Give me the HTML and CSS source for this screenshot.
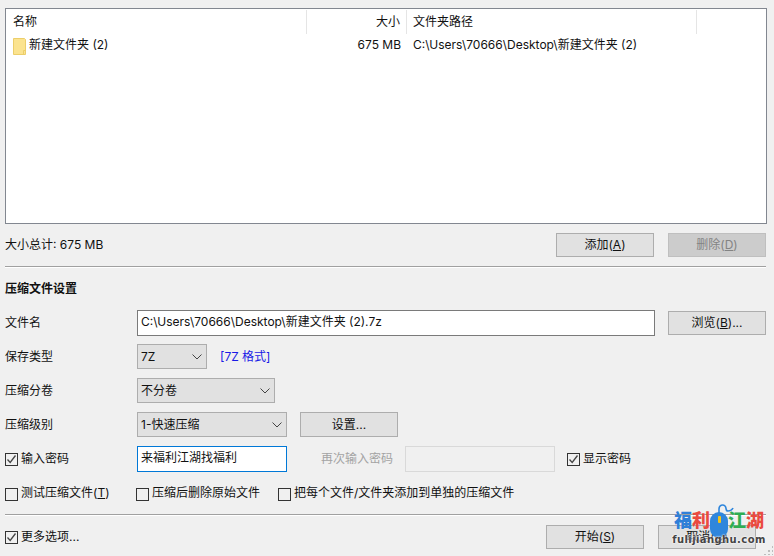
FILE: index.html
```html
<!DOCTYPE html>
<html lang="zh-CN">
<head>
<meta charset="utf-8">
<title>创建压缩文件</title>
<link rel="stylesheet" href="styles.css">
</head>
<body>
<div class="app">
  <div class="list">
    <div class="list-head">
      <div class="col col-name">名称</div>
      <div class="col col-size">大小</div>
      <div class="col col-path">文件夹路径</div>
    </div>
    <div class="list-row">
      <div class="cell col-name-cell">
        <svg class="folder" width="13" height="17" viewBox="0 0 13 17"><path d="M.5.5h11l1 1v15H.5z" fill="#fbe38f" stroke="#ecce6a"/><path d="M10.5 16.5v-4h2" fill="none" stroke="#ecce6a"/></svg>
        <span class="nudge">新建文件夹 (2)</span>
      </div>
      <div class="cell col-size-cell"><span class="nudge">675 MB</span></div>
      <div class="cell col-path-cell"><span class="nudge">C:\Users\70666\Desktop\新建文件夹 (2)</span></div>
    </div>
  </div>

  <div class="summary">
    <div class="summary-text">大小总计: 675 MB</div>
    <div class="btn">添加(<u>A</u>)</div>
    <div class="btn btn-disabled gap-left">删除(<u>D</u>)</div>
  </div>

  <div class="sep sep-top"></div>

  <div class="title">压缩文件设置</div>

  <div class="row row-file">
    <div class="label">文件名</div>
    <div class="input input-file">C:\Users\70666\Desktop\新建文件夹 (2).7z</div>
    <div class="btn gap-left">浏览(<u>B</u>)...</div>
  </div>

  <div class="row row-select">
    <div class="label">保存类型</div>
    <div class="select select-type"><span>7Z</span><svg class="chev" width="10" height="6" viewBox="0 0 10 6"><path d="M.5.5 5 5 9.5.5" fill="none" stroke="#444"/></svg></div>
    <div class="format">[7Z 格式]</div>
  </div>

  <div class="row row-select">
    <div class="label">压缩分卷</div>
    <div class="select select-split"><span>不分卷</span><svg class="chev" width="10" height="6" viewBox="0 0 10 6"><path d="M.5.5 5 5 9.5.5" fill="none" stroke="#444"/></svg></div>
  </div>

  <div class="row row-select">
    <div class="label">压缩级别</div>
    <div class="select select-level"><span>1-快速压缩</span><svg class="chev" width="10" height="6" viewBox="0 0 10 6"><path d="M.5.5 5 5 9.5.5" fill="none" stroke="#444"/></svg></div>
    <div class="btn btn-settings">设置...</div>
  </div>

  <div class="row row-pass">
    <label class="check check-pass">
      <span class="box"><svg width="11" height="11" viewBox="0 0 11 11"><path d="M1.5 5.5 4.2 8.5 9.5 1.5" fill="none" stroke="#444" stroke-width="1.3"/></svg></span>
      <span>输入密码</span>
    </label>
    <div class="input input-pass">来福利江湖找福利</div>
    <div class="label-off">再次输入密码</div>
    <div class="input input-off"></div>
    <label class="check check-show">
      <span class="box"><svg width="11" height="11" viewBox="0 0 11 11"><path d="M1.5 5.5 4.2 8.5 9.5 1.5" fill="none" stroke="#444" stroke-width="1.3"/></svg></span>
      <span>显示密码</span>
    </label>
  </div>

  <div class="row row-checks">
    <label class="check check-test"><span class="box"></span><span class="lift">测试压缩文件(<u>T</u>)</span></label>
    <label class="check check-del"><span class="box"></span><span class="lift">压缩后删除原始文件</span></label>
    <label class="check"><span class="box"></span><span class="lift">把每个文件/文件夹添加到单独的压缩文件</span></label>
  </div>

  <div class="sep sep-bottom"></div>

  <div class="footer">
    <label class="check check-more">
      <span class="box"><svg width="11" height="11" viewBox="0 0 11 11"><path d="M1.5 5.5 4.2 8.5 9.5 1.5" fill="none" stroke="#444" stroke-width="1.3"/></svg></span>
      <span>更多选项...</span>
    </label>
    <div class="btn">开始(<u>S</u>)</div>
    <div class="btn gap-left">取消(<u>C</u>)</div>
  </div>
</div>

<div class="grip"></div>

<div class="watermark">
  <div class="wm-top">
    <span class="wm-blue">福</span><span class="wm-red">利</span>
    <svg class="wm-mouse" width="24" height="35" viewBox="0 0 24 35"><path d="M9 11V6c0-4 4-5 6-3s0 5 3 5 4-1 5-3" fill="none" stroke="#2f86dc" stroke-width="1.6"/><rect x="0" y="9" width="18" height="26" rx="9" fill="#2f86dc"/><rect x="8" y="13" width="3" height="7" rx="1" fill="#f5c518"/></svg>
    <span class="wm-green">江</span><span class="wm-red">湖</span>
  </div>
  <div class="wm-url">fulijianghu.com</div>
</div>
</body>
</html>
```

FILE: styles.css
```css
* { box-sizing: border-box; }

html, body {
  margin: 0;
  padding: 0;
  background: #f0f0f0;
}

body {
  width: 774px;
  height: 556px;
  overflow: hidden;
  position: relative;
  font-family: "Inter", "Noto Sans CJK SC", sans-serif;
  font-size: 12px;
  line-height: 16px;
  color: #111;
}

.app {
  display: flex;
  flex-direction: column;
  padding: 8px 7px 0 5px;
}

/* file list */
.list {
  height: 216px;
  background: #fff;
  border: 1px solid #828790;
}

.list-head {
  display: flex;
  height: 24px;
  margin-top: 1px;
}

.col {
  border-right: 1px solid #e5e5e5;
  line-height: 23px;
}

.col-name { width: 301px; padding-left: 7px; }
.col-size { width: 100px; padding-right: 6px; text-align: right; }
.col-path { width: 290px; padding-left: 6px; }

.list-row {
  display: flex;
  height: 20px;
  margin-top: 1px;
  align-items: center;
}

.cell { white-space: nowrap; }

.col-name-cell {
  width: 301px;
  padding-left: 7px;
  display: flex;
  align-items: center;
  gap: 3px;
}

.folder { flex: none; margin-top: 2px; }
.nudge { display: block; margin-top: -1px; }
.col-size-cell { width: 100px; padding-right: 6px; text-align: right; }
.col-path-cell { padding-left: 6px; }

/* buttons */
.btn {
  width: 98px;
  height: 24px;
  flex: none;
  display: flex;
  align-items: center;
  justify-content: center;
  background: #e1e1e1;
  border: 1px solid #adadad;
  white-space: pre;
}

.btn-disabled {
  background: #cccccc;
  border-color: #bfbfbf;
  color: #838383;
}

.gap-left { margin-left: 14px; }

.summary {
  display: flex;
  align-items: center;
  margin-top: 9px;
  padding-right: 1px;
}

.summary-text { flex: 1; }

.sep {
  height: 2px;
  margin-right: 1px;
  background: #a0a0a0;
  border-bottom: 1px solid #fff;
}

.sep-top { margin-top: 9px; }
.sep-bottom { margin-top: 13px; }

.title {
  margin-top: 13px;
  height: 16px;
  font-weight: 700;
}

.row {
  display: flex;
  align-items: center;
}

.label {
  width: 132px;
  flex: none;
}

.input {
  height: 26px;
  flex: none;
  background: #fff;
  border: 1px solid #7a7a7a;
  padding: 0 3px;
  line-height: 21px;
  white-space: nowrap;
}

.row-file { margin-top: 13px; padding-right: 1px; }
.input-file { width: 518px; }
.row-file .gap-left { margin-left: 13px; }

.row-select { margin-top: 9px; height: 25px; }
.row-file + .row-select { margin-top: 8px; }

.select {
  height: 25px;
  flex: none;
  display: flex;
  align-items: center;
  justify-content: space-between;
  background: #e1e1e1;
  border: 1px solid #adadad;
  padding: 0 4px 0 3px;
}

.chev { flex: none; }

.select-type { width: 70px; }
.select-split { width: 138px; }
.select-level { width: 150px; }

.format {
  margin-left: 13px;
  color: #1a1ae6;
}

.btn-settings {
  height: 25px;
  margin-left: 13px;
}

.row-pass { margin-top: 9px; }

.check {
  display: flex;
  align-items: center;
  gap: 3px;
  white-space: nowrap;
  flex: none;
}

.lift { display: block; margin-top: -3px; }

.box {
  width: 13px;
  height: 13px;
  flex: none;
  display: flex;
  align-items: center;
  justify-content: center;
  background: transparent;
  border: 1px solid #333;
}

.check-pass { width: 132px; }

.input-pass {
  width: 150px;
  border-color: #0078d7;
}

.label-off {
  width: 84px;
  margin-left: 34px;
  flex: none;
  color: #a3a3a3;
}

.input-off {
  width: 150px;
  background: #f0f0f0;
  border-color: #d9d9d9;
}

.check-show { margin-left: 12px; }

.row-checks { margin-top: 16px; height: 13px; }
.check-test { width: 131px; }
.check-del { width: 142px; }

.footer {
  display: flex;
  align-items: center;
  margin-top: 9px;
  padding-right: 11px;
}

.check-more { flex: 1; }

/* resize grip, lies over the window corner */
.grip {
  position: absolute;
  right: 1px;
  bottom: 1px;
  width: 10px;
  height: 10px;
  background-image: radial-gradient(#bdbdbd 1px, transparent 1.2px);
  background-size: 4px 4px;
  clip-path: polygon(100% 0, 100% 100%, 0 100%);
}

/* watermark stamped over the screenshot */
.watermark {
  position: absolute;
  left: 674px;
  top: 503px;
  width: 90px;
  height: 44px;
  display: flex;
  flex-direction: column;
  align-items: center;
}

.wm-top {
  display: flex;
  align-items: flex-start;
  height: 30px;
  font-size: 18px;
  line-height: 18px;
  font-weight: 900;
  white-space: nowrap;
}

.wm-top span { margin-top: 9px; }

.wm-mouse {
  flex: none;
  width: 24px;
  height: 35px;
  margin: 0 -6px 0 0;
}

.wm-blue { color: #2f7fd8; }
.wm-red { color: #ea4a3f; }
.wm-green { color: #2fae52; }

.wm-url {
  font-family: "DejaVu Sans", sans-serif;
  font-size: 10px;
  line-height: 14px;
  font-weight: 700;
  letter-spacing: 0.4px;
  color: #444;
  text-shadow: 0 0 2px #fff, 0 0 2px #fff;
  white-space: nowrap;
}
```
